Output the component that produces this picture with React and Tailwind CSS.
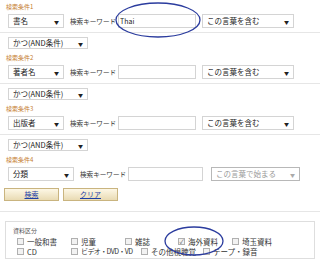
const font = { fontFamily: '"Noto Sans CJK JP", "Liberation Sans", sans-serif' };

function FakeSelect({ label, w, h = 14, muted }) {
    return (
        <div
            className={`flex items-center justify-between bg-white border px-[4px] ${muted ? 'border-[#b8b8b8] text-[#999]' : 'border-[#d4d4d4] text-[#222]'}`}
            style={{ width: w, height: h }}
        >
            <span className="text-[7.5px] leading-none whitespace-nowrap">{label}</span>
            <span className={`text-[5px] leading-none ${muted ? 'text-[#aaa]' : 'text-[#222]'}`}>▼</span>
        </div>
    );
}

function Condition({ n, field, value, match, last }) {
    const wide = last;
    return (
        <div>
            <div className="h-[13px] pl-[6px] text-[6px] leading-[13px] text-[#c47a2c]">検索条件{n}</div>
            <div className="flex items-center h-[14px] mt-[1px] pl-[8px]">
                <FakeSelect label={field} w={wide ? 66 : 56} />
                <span className="ml-[6px] w-[48px] text-[6.6px] leading-none text-[#333] whitespace-nowrap">検索キーワード</span>
                <div
                    className="h-[14px] bg-white border border-[#d4d4d4] flex items-center px-[1px] text-[7px] text-[#222]"
                    style={{ width: wide ? 75 : 78 }}
                >
                    {value}
                </div>
                <div className={wide ? 'ml-[8px]' : 'ml-[6px]'}>
                    <FakeSelect label={match} w={wide ? 89 : 92} muted={wide} />
                </div>
            </div>
            {!last && <div className="h-[5px] border-b border-[#e6e6e6]" />}
            {!last && (
                <div className="pl-[8px] pt-[4px] pb-[2px]">
                    <FakeSelect label="かつ(AND条件)" w={80} h={12} />
                </div>
            )}
        </div>
    );
}

function Check({ label, checked, w, tight }) {
    return (
        <div className="flex items-center" style={{ width: w }}>
            <span className="w-[7px] h-[7px] shrink-0 border border-[#b0b0b0] bg-[#f2f2f2] flex items-center justify-center text-[6px] leading-none text-[#555]">
                {checked ? '✓' : ''}
            </span>
            <span className={`ml-[3px] leading-none text-[#333] whitespace-nowrap ${tight ? 'text-[7px] tracking-[-0.6px]' : 'text-[7.5px]'}`}>{label}</span>
        </div>
    );
}

export default function App() {
    const row1 = [['一般和書', 54], ['児童', 54], ['雑誌', 53], ['海外資料', 54], ['埼玉資料', 54]];
    const row2 = [['CD', 54], ['ビデオ・DVD・VD', 70], ['その他視聴覚', 62], ['テープ・録音', 60]];
    return (
        <div className="relative w-[320px] h-[270px] bg-white overflow-hidden" style={font}>
            <Condition n={1} field="書名" value="Thai" match="この言葉を含む" />
            <Condition n={2} field="著者名" value="" match="この言葉を含む" />
            <Condition n={3} field="出版者" value="" match="この言葉を含む" />
            <Condition n={4} field="分類" value="" match="この言葉で始まる" last />

            <div className="flex gap-[4px] pl-[4px] mt-[7px] pb-[10px] border-b border-[#e6e6e6]">
                {['検索', 'クリア'].map((t) => (
                    <div
                        key={t}
                        className="w-[55px] h-[13px] flex items-center justify-center border border-[#c9b47f] bg-gradient-to-b from-[#fdf7e6] to-[#e9dbb3] text-[7px] leading-none text-[#1d3fa6] underline"
                    >
                        {t}
                    </div>
                ))}
            </div>

            <div className="mx-[5px] mt-[9px] h-[38px] border border-[#dedede] pl-[11px] pt-[6px]">
                <div className="text-[6px] leading-none text-[#555] -ml-[4px]">資料区分</div>
                <div className="flex mt-[4px]">
                    {row1.map(([l, w]) => (
                        <Check key={l} label={l} w={w} checked={l === '海外資料'} />
                    ))}
                </div>
                <div className="flex mt-[2px]">
                    {row2.map(([l, w]) => (
                        <Check key={l} label={l} w={w} tight={l.length > 6} />
                    ))}
                </div>
            </div>

            <svg className="absolute left-0 top-0 pointer-events-none" width="320" height="270">
                <ellipse cx="158" cy="20" rx="42" ry="17" fill="none" stroke="#2b3c9e" strokeWidth="1.3" />
                <ellipse cx="194" cy="241" rx="29" ry="14" fill="none" stroke="#2b3c9e" strokeWidth="1.3" />
            </svg>
        </div>
    );
}
